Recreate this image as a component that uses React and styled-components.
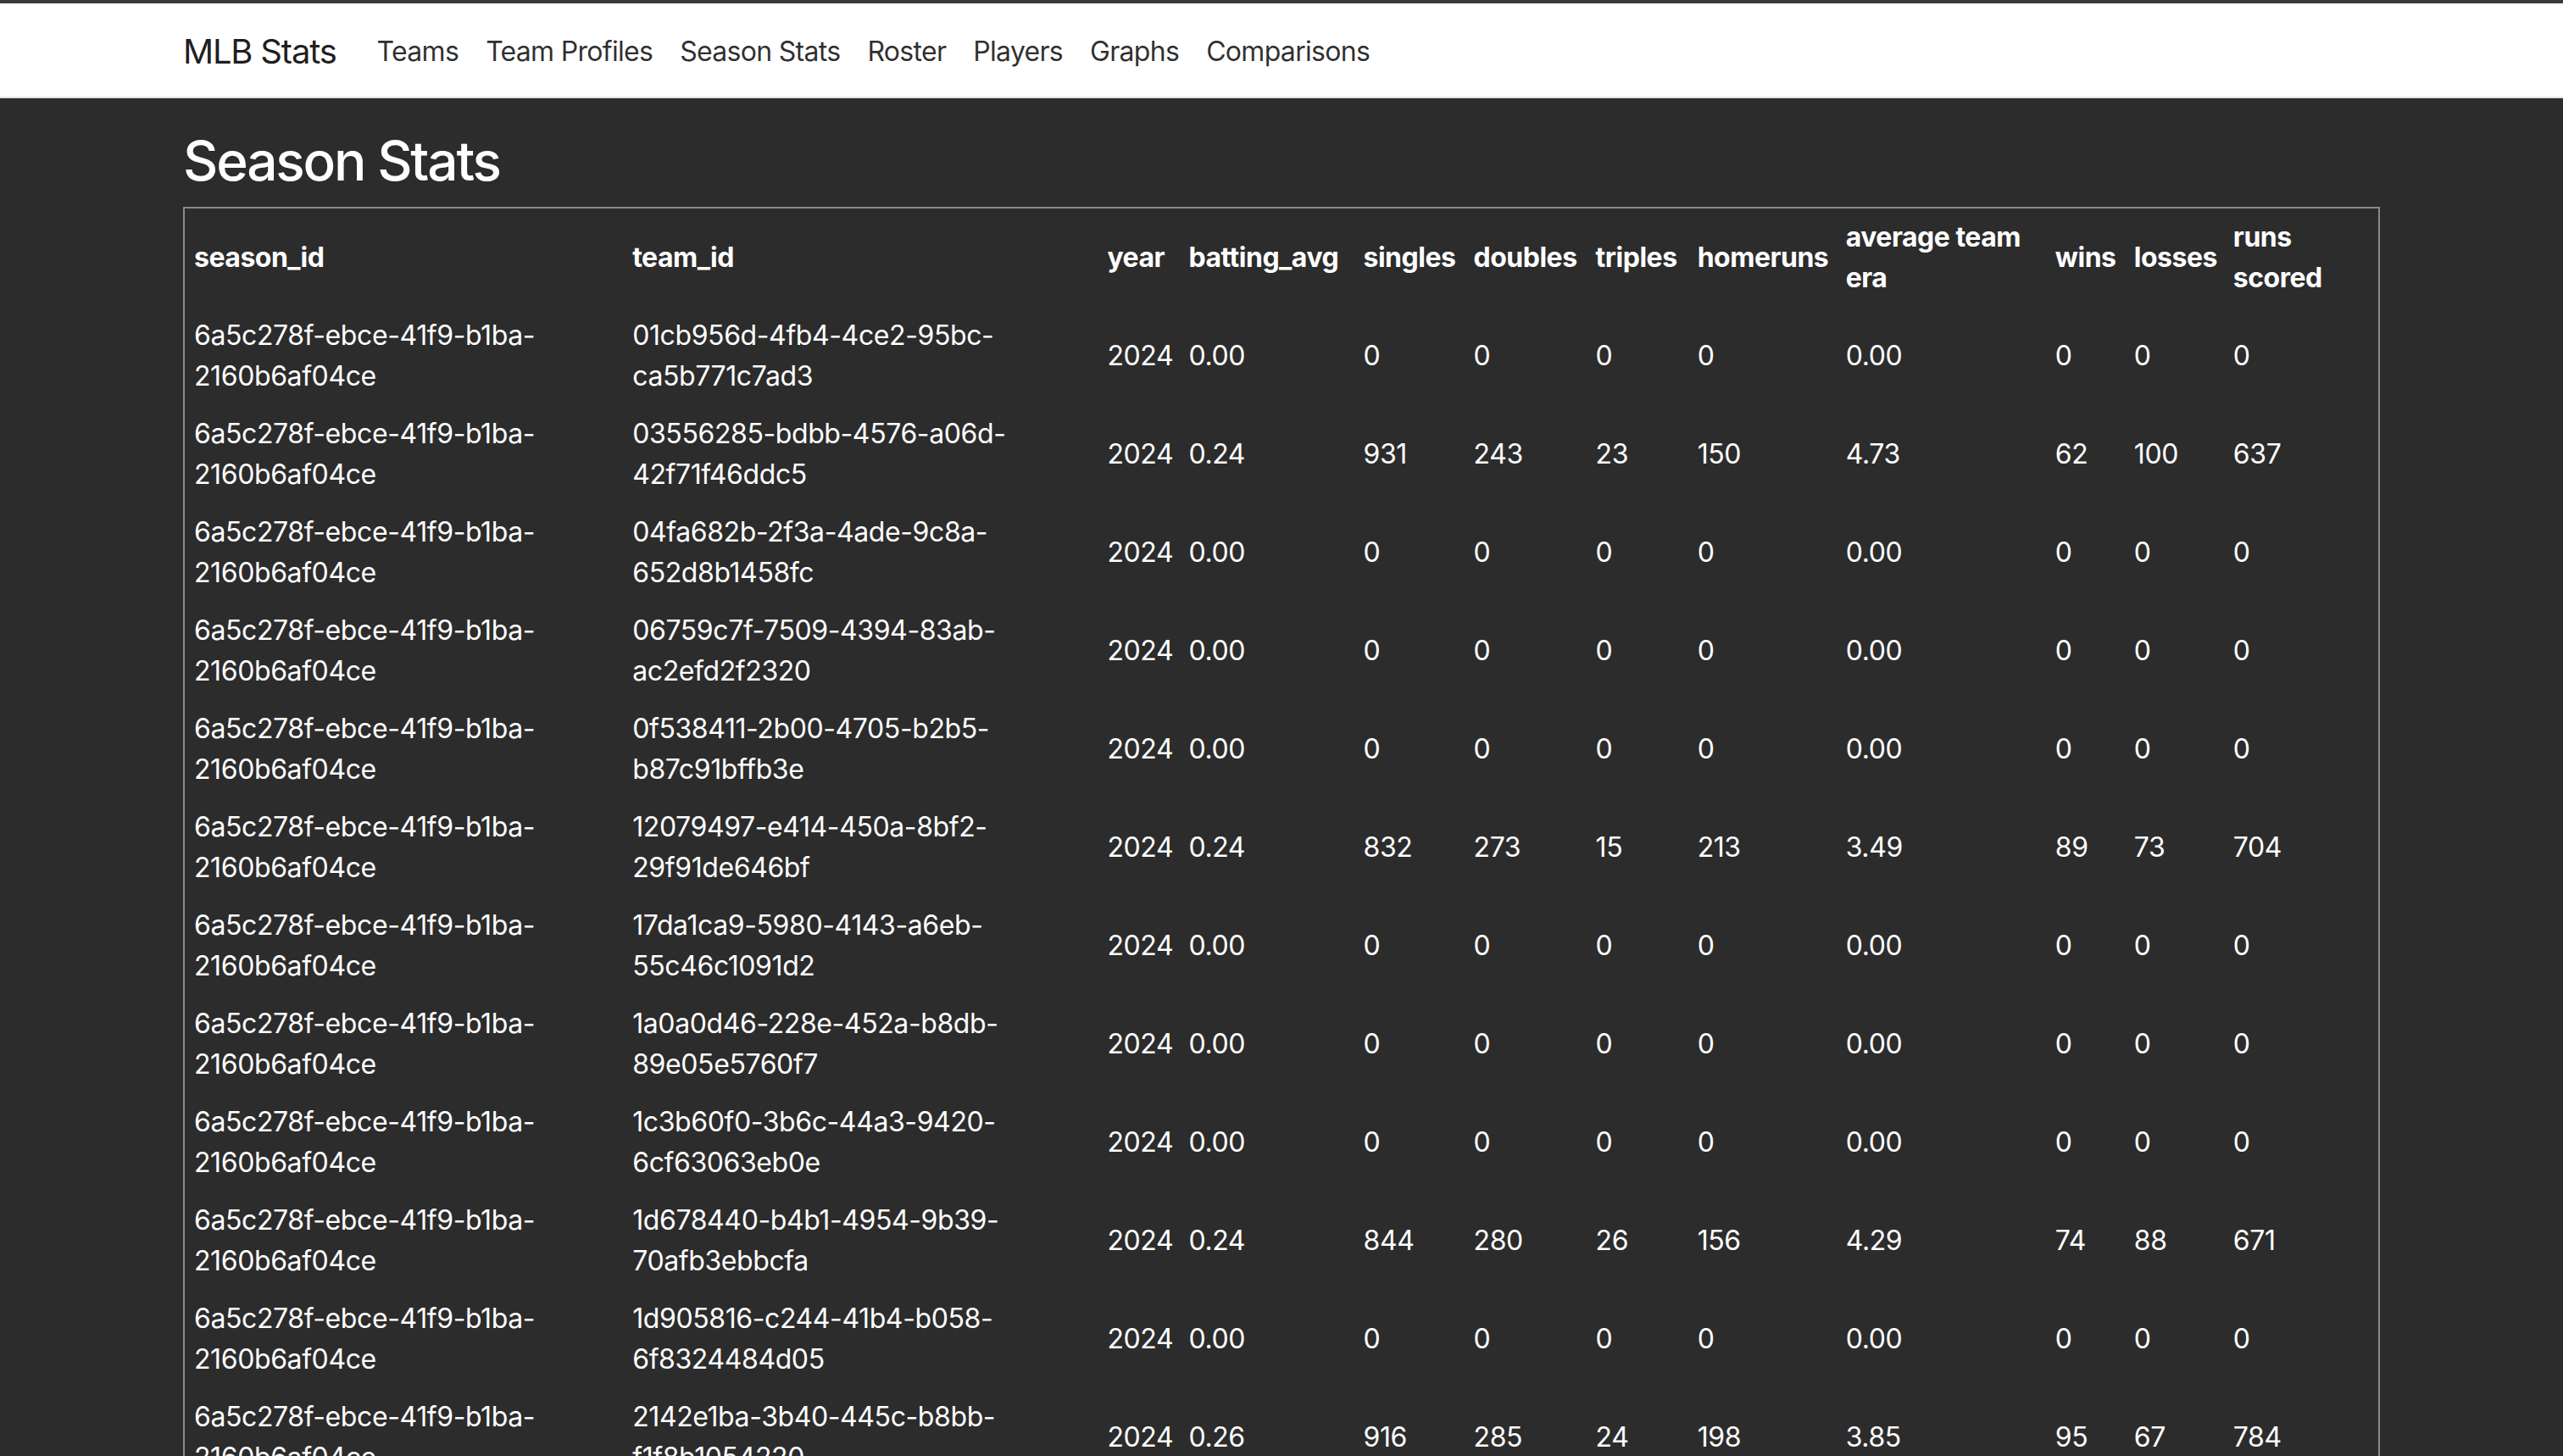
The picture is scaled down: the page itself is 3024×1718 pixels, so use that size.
import React from "react";
import styled, { createGlobalStyle } from "styled-components";

const GlobalStyle = createGlobalStyle`
  * {
    box-sizing: border-box;
  }
  body {
    margin: 0;
    background-color: #2c2c2c;
    font-family: Inter, "Liberation Sans", sans-serif;
    font-size: 32px;
    line-height: 1.5;
    color: #ffffff;
  }
`;

const TopStrip = styled.div`
  height: 4px;
  background-color: #3b3b3b;
`;

const Navbar = styled.nav`
  height: 112px;
  padding-top: 4px;
  background-color: #ffffff;
  border-bottom: 2px solid #dee2e6;
  display: flex;
  align-items: center;
`;

const Container = styled.div`
  width: 100%;
  max-width: 2640px;
  margin: 0 auto;
  padding: 0 24px;
`;

const NavInner = styled(Container)`
  display: flex;
  align-items: center;
`;

const Brand = styled.a`
  font-size: 40px;
  line-height: 1.5;
  color: rgba(0, 0, 0, 0.9);
  margin-right: 32px;
  text-decoration: none;
  letter-spacing: -1.2px;
`;

const NavLinks = styled.div`
  display: flex;
  align-items: center;
`;

const NavLink = styled.a`
  padding: 16px;
  color: rgba(0, 0, 0, 0.82);
  text-decoration: none;
  letter-spacing: -0.7px;
`;

const Title = styled.h2`
  margin: 36px 0 15px;
  font-size: 64px;
  font-weight: 500;
  line-height: 1.2;
  letter-spacing: -2.2px;
`;

const Table = styled.table`
  width: 100%;
  table-layout: fixed;
  border-collapse: collapse;
  border: 2px solid #8a8a8a;
  border-bottom: none;
`;

const Th = styled.th`
  padding: 10px 11px;
  text-align: left;
  vertical-align: middle;
  font-weight: 700;
  letter-spacing: -0.5px;
`;

const Td = styled.td`
  padding: 10px 11px;
  vertical-align: middle;
  letter-spacing: -0.4px;
`;

const columns = [
  { key: "season_id", label: "season_id", width: 518 },
  { key: "team_id", label: "team_id", width: 560 },
  { key: "year", label: "year", width: 96 },
  { key: "batting_avg", label: "batting_avg", width: 206 },
  { key: "singles", label: "singles", width: 130 },
  { key: "doubles", label: "doubles", width: 144 },
  { key: "triples", label: "triples", width: 120 },
  { key: "homeruns", label: "homeruns", width: 175 },
  { key: "era", label: "average team era", width: 247 },
  { key: "wins", label: "wins", width: 93 },
  { key: "losses", label: "losses", width: 117 },
  { key: "runs", label: "runs scored", width: 183 },
];

const SEASON = "6a5c278f-ebce-41f9-b1ba-2160b6af04ce";

const teams = [
  ["01cb956d-4fb4-4ce2-95bc-ca5b771c7ad3"],
  ["03556285-bdbb-4576-a06d-42f71f46ddc5", "0.24", 931, 243, 23, 150, "4.73", 62, 100, 637],
  ["04fa682b-2f3a-4ade-9c8a-652d8b1458fc"],
  ["06759c7f-7509-4394-83ab-ac2efd2f2320"],
  ["0f538411-2b00-4705-b2b5-b87c91bffb3e"],
  ["12079497-e414-450a-8bf2-29f91de646bf", "0.24", 832, 273, 15, 213, "3.49", 89, 73, 704],
  ["17da1ca9-5980-4143-a6eb-55c46c1091d2"],
  ["1a0a0d46-228e-452a-b8db-89e05e5760f7"],
  ["1c3b60f0-3b6c-44a3-9420-6cf63063eb0e"],
  ["1d678440-b4b1-4954-9b39-70afb3ebbcfa", "0.24", 844, 280, 26, 156, "4.29", 74, 88, 671],
  ["1d905816-c244-41b4-b058-6f8324484d05"],
  ["2142e1ba-3b40-445c-b8bb-f1f8b1054220", "0.26", 916, 285, 24, 198, "3.85", 95, 67, 784],
  ["26f7c2a1-9e4d-4b8a-a0c3-7d12e9f04b61"],
  ["2b9e4410-6c5a-4f37-8d21-0e9ab3c7f512"],
];

const rows = teams.map(([team_id, avg, singles, doubles, triples, homeruns, era, wins, losses, runs]) => ({
  season_id: SEASON,
  team_id,
  year: 2024,
  batting_avg: avg || "0.00",
  singles: singles || 0,
  doubles: doubles || 0,
  triples: triples || 0,
  homeruns: homeruns || 0,
  era: era || "0.00",
  wins: wins || 0,
  losses: losses || 0,
  runs: runs || 0,
}));

const navItems = ["Teams", "Team Profiles", "Season Stats", "Roster", "Players", "Graphs", "Comparisons"];

const App = () => {
  return (
    <>
      <GlobalStyle />
      <TopStrip />
      <Navbar>
        <NavInner>
          <Brand href="#">MLB Stats</Brand>
          <NavLinks>
            {navItems.map((item) => (
              <NavLink key={item} href="#">
                {item}
              </NavLink>
            ))}
          </NavLinks>
        </NavInner>
      </Navbar>
      <Container>
        <Title>Season Stats</Title>
        <Table>
          <colgroup>
            {columns.map((col) => (
              <col key={col.key} style={{ width: col.width }} />
            ))}
          </colgroup>
          <thead>
            <tr>
              {columns.map((col) => (
                <Th key={col.key}>{col.label}</Th>
              ))}
            </tr>
          </thead>
          <tbody>
            {rows.map((row) => (
              <tr key={row.team_id}>
                {columns.map((col) => (
                  <Td key={col.key}>{row[col.key]}</Td>
                ))}
              </tr>
            ))}
          </tbody>
        </Table>
      </Container>
    </>
  );
};

export default App;
